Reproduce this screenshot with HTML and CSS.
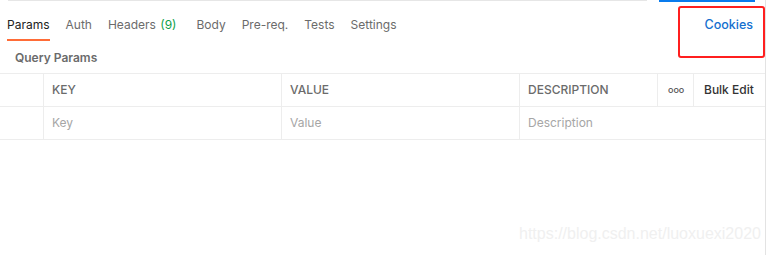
FILE: index.html
```html
<!DOCTYPE html>
<html lang="en">
<head>
    <meta charset="UTF-8">
    <title>Params</title>
    <link rel="stylesheet" href="styles.css">
</head>
<body>
    <div class="panel">
        <div class="top-bar">
            <div class="url-line"></div>
            <div class="send-line"></div>
        </div>

        <div class="tabs">
            <div class="tab active">Params</div>
            <div class="tab">Auth</div>
            <div class="tab headers">Headers <span class="count">(9)</span></div>
            <div class="tab">Body</div>
            <div class="tab">Pre-req.</div>
            <div class="tab">Tests</div>
            <div class="tab">Settings</div>
            <div class="tab cookies">Cookies</div>
        </div>

        <div class="section-title">Query Params</div>

        <div class="params-table">
            <div class="cell head check"></div>
            <div class="cell head">KEY</div>
            <div class="cell head">VALUE</div>
            <div class="cell head">DESCRIPTION</div>
            <div class="cell head dots">ooo</div>
            <div class="cell head bulk">Bulk Edit</div>

            <div class="cell check"></div>
            <div class="cell placeholder">Key</div>
            <div class="cell placeholder">Value</div>
            <div class="cell placeholder wide">Description</div>
        </div>

        <div class="watermark">https://blog.csdn.net/luoxuexi2020</div>
    </div>
</body>
</html>
```

FILE: styles.css
```css
body {
    margin: 0;
    font-family: Inter, 'Noto Sans', sans-serif;
    background: #ffffff;
}

.panel {
    width: 765px;
    height: 255px;
    border-right: 1px solid #e3e3e3;
    position: relative;
}

.top-bar {
    display: flex;
    height: 2px;
}

.url-line {
    margin-left: 8px;
    width: 639px;
    height: 1px;
    background-color: #e6e6e6;
}

.send-line {
    margin-left: 12px;
    width: 96px;
    height: 2px;
    background-color: #097bed;
}

.tabs {
    display: flex;
    align-items: center;
    gap: 16px;
    padding: 0 0 0 7px;
    height: 39px;
}

.tab {
    font-size: 12px;
    color: #6b6b6b;
    height: 39px;
    line-height: 46px;
    box-sizing: border-box;
    border-bottom: 2px solid transparent;
}

.tab.active {
    color: #212121;
    border-bottom-color: #ff6c37;
}

.tab.headers {
    margin-right: 4px;
}

.count {
    color: #0e9f4a;
    margin-left: 1px;
}

.tab.cookies {
    margin-left: auto;
    margin-right: 12px;
    font-size: 12.5px;
    color: #1570cf;
    font-weight: 500;
    position: relative;
}

.tab.cookies::after {
    content: '';
    position: absolute;
    left: -27px;
    right: -12px;
    top: 4px;
    height: 52px;
    border: 2px solid #ff1f1f;
    border-radius: 3px;
    box-sizing: border-box;
}

.section-title {
    font-size: 12px;
    font-weight: 600;
    color: #6b6b6b;
    padding-left: 15px;
    height: 32px;
    line-height: 34px;
}

.params-table {
    display: grid;
    grid-template-columns: 44px 238px 238px 138px 36px 71px;
    grid-auto-rows: 33px;
    border-top: 1px solid #ededed;
}

.cell {
    border-bottom: 1px solid #ededed;
    border-right: 1px solid #ededed;
    font-size: 12px;
    line-height: 32px;
    padding-left: 8px;
    white-space: nowrap;
    overflow: hidden;
}

.cell.check {
    padding: 0;
}

.cell.head {
    color: #6b6b6b;
    font-weight: 500;
}

.cell.dots {
    font-size: 9px;
    padding-left: 10px;
    color: #555;
}

.cell.bulk {
    border-right: none;
    color: #333;
    padding-left: 10px;
}

.cell.placeholder {
    color: #a6a6a6;
}

.cell.wide {
    grid-column: span 3;
    border-right: none;
}

.watermark {
    position: absolute;
    left: 519px;
    top: 225px;
    font-family: 'Liberation Sans', Arial, sans-serif;
    font-size: 16px;
    color: #f0f0f0;
}
```
